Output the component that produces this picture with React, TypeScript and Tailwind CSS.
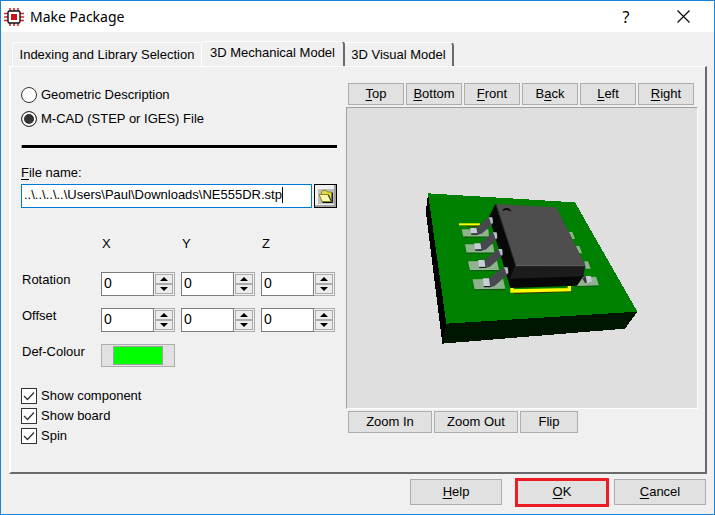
import { useState, type ReactNode } from "react";

const pushButton =
  "flex h-[22px] items-center justify-center border border-[#adadad] bg-[#e1e1e1] text-[13px] leading-4 text-black";
const footerButton = "border bg-[#e1e1e1] text-[13px] leading-4 text-black";

function ChipIcon() {
  return (
    <svg width="20" height="20" viewBox="0 0 20 20" aria-hidden="true" className="shrink-0">
      <path
        d="M6 1v18M10 1v18M14 1v18M0 6.5h20M0 10h20M0 13.5h20"
        stroke="#d9252b"
        strokeWidth="1.6"
      />
      <rect x="4" y="4" width="12" height="12" rx="1.5" fill="#fff" stroke="#111" strokeWidth="1.4" />
      <rect x="7" y="7" width="6" height="6" fill="#cc1219" />
    </svg>
  );
}

function FolderIcon() {
  return (
    <svg width="16" height="15" viewBox="0 0 16 15" aria-hidden="true">
      <rect width="16" height="15" fill="#c0c0c0" />
      <path d="M14.3 3.5V13.3H4.5" fill="none" stroke="#111" strokeWidth="1.2" />
      <path d="M3.5 12.5V3l1.2-1.5h3.6L9.5 3h4v9.5z" fill="#e4dc4c" stroke="#8a8420" strokeWidth="1" />
      <path d="M1.2 5.5h8.6l3.4 7H4z" fill="#fdf9b4" stroke="#8a8420" strokeWidth="1" />
      <path d="M10.3 5.5l3.2 6.8" stroke="#222" strokeWidth="1" />
    </svg>
  );
}

type Point = [number, number];

function Lead({ tip, foot, size }: { tip: Point; foot: Point; size: number }) {
  const [tx, ty] = tip;
  const [fx, fy] = foot;
  const bottom = fy + size;
  return (
    <g>
      <polygon
        points={`${fx + 2},${bottom - 2} ${fx + 34},${bottom - 4} ${fx + 22},${bottom + 2} ${fx + 3},${bottom + 2}`}
        fill="#15151a"
      />
      <polygon
        points={`${tx},${ty} ${tx + 13},${ty + 4} ${tx + 12},${ty + 20} ${fx + 34},${bottom - 1} ${fx + 20},${bottom} ${fx + 17},${fy}`}
        fill="#48484f"
      />
      <polygon
        points={`${fx},${fy} ${fx + 18},${fy} ${fx + 21},${bottom - 2} ${fx + 2},${bottom - 2}`}
        fill="#c8ced6"
      />
      <polygon
        points={`${tx},${ty} ${tx + 11},${ty} ${tx + 13},${ty + 17} ${tx + 7},${ty + 19} ${tx + 4},${ty + 9}`}
        fill="#b9bec7"
      />
    </g>
  );
}

function BoardScene() {
  return (
    <svg
      viewBox="-204 -216 1050 900"
      className="h-full w-full"
      role="img"
      aria-label="3D preview of the package on its board"
    >
      <g shapeRendering="crispEdges">
        <polygon points="39,40 34,83 34,108 82,491 94,430" fill="#000" />
        <polygon points="94,430 667,395 630,446 82,491" fill="#001600" />
        <polygon points="39,40 480,67 667,395 94,431" fill="#008000" />
      </g>
      <g fill="#8fb28f">
        <polygon points="140,148 220,148 222,170 145,170" />
        <polygon points="150,193 234,193 238,218 155,218" />
        <polygon points="159,244 246,242 252,270 165,271" />
        <polygon points="173,298 264,296 271,326 179,328" />
        <polygon points="462,156 472,156 480,177 472,177" />
        <polygon points="482,198 493,198 501,220 493,220" />
        <polygon points="508,244 519,244 527,266 512,266" />
        <polygon points="496,292 543,290 552,317 481,319" />
      </g>
      <path d="M145 171h77M155 219h83M165 272h87M179 329h92M481 320l71-3" stroke="#123d12" strokeWidth="2" />
      <path d="M155 139h40" stroke="#4d3000" strokeWidth="3" />
      <path d="M132 133h63" stroke="#ffff00" strokeWidth="6" />
      <path d="M296 341L470 334" stroke="#4d3000" strokeWidth="3" />
      <path d="M291 321V333L463 329V316" fill="none" stroke="#ffff00" strokeWidth="10" />
      <polygon points="241,72 222,110 286,324 302,256" fill="#080808" />
      <polygon points="286,290 508,285 486,317 286,324" fill="#070707" />
      <polygon points="301,256 511,256 505,289 284,296" fill="#1c1c1c" />
      <polygon points="243,72 424,82 511,256 302,257" fill="#4e4e4e" />
      <path d="M243 73L302 257" stroke="#242424" strokeWidth="3" />
      <path d="M302 257H510" stroke="#777" strokeWidth="2" />
      <path d="M262 91q4-8 15-7q11 2 12 11q-8-4-13-5q-7-1-10 3z" fill="#080808" />
      <polygon points="502,295 514,289 518,307 510,309" fill="#333338" />
      <polygon points="512,288 527,288 531,304 516,309" fill="#c5cbd3" />
      <Lead tip={[221, 112]} foot={[166, 144]} size={18} />
      <Lead tip={[234, 157]} foot={[178, 190]} size={20} />
      <Lead tip={[250, 207]} foot={[190, 240]} size={22} />
      <Lead tip={[267, 262]} foot={[204, 295]} size={25} />
    </svg>
  );
}

function Spinner({ label }: { label: string }) {
  const [value, setValue] = useState(0);
  return (
    <div className="flex h-6 w-[74px] border border-[#acacac] bg-[#f0f0f0]">
      <input
        aria-label={label}
        value={value}
        onChange={(e) => setValue(Number(e.target.value) || 0)}
        className="-my-px -ml-px w-[53px] min-w-0 border border-[#7a7a7a] bg-white px-0.5 pb-0.5 text-sm leading-4 outline-none"
      />
      <div className="flex flex-1 flex-col p-px">
        <button
          type="button"
          aria-label={`Increase ${label}`}
          onClick={() => setValue(value + 1)}
          className="flex flex-1 items-center justify-center border border-[#acacac] bg-[#ececec]"
        >
          <svg width="8" height="4" viewBox="0 0 8 4" aria-hidden="true"><path d="M4 0l4 4H0z" /></svg>
        </button>
        <button
          type="button"
          aria-label={`Decrease ${label}`}
          onClick={() => setValue(value - 1)}
          className="flex flex-1 items-center justify-center border border-[#acacac] bg-[#ececec]"
        >
          <svg width="8" height="4" viewBox="0 0 8 4" aria-hidden="true"><path d="M0 0h8L4 4z" /></svg>
        </button>
      </div>
    </div>
  );
}

function Radio({ label, checked, onSelect }: { label: string; checked: boolean; onSelect: () => void }) {
  return (
    <label className="flex h-6 items-center gap-1">
      <input
        type="radio"
        name="source"
        checked={checked}
        onChange={onSelect}
        className="size-4 appearance-none rounded-full border border-[#333] bg-white checked:bg-[#333] checked:shadow-[inset_0_0_0_2px_white]"
      />
      {label}
    </label>
  );
}

function Check({ label }: { label: string }) {
  return (
    <label className="flex h-5 items-center gap-1">
      <span className="grid size-4">
        <input
          type="checkbox"
          defaultChecked
          className="peer col-start-1 row-start-1 size-4 appearance-none border border-[#333] bg-white"
        />
        <svg
          viewBox="0 0 16 16"
          aria-hidden="true"
          className="pointer-events-none invisible col-start-1 row-start-1 size-4 peer-checked:visible"
        >
          <path d="M3 8l3.5 3.5L13 4.5" fill="none" stroke="#333" strokeWidth="1.3" />
        </svg>
      </span>
      {label}
    </label>
  );
}

function Key({ children }: { children: ReactNode }) {
  return <span className="underline underline-offset-2">{children}</span>;
}

export default function App() {
  const [source, setSource] = useState("mcad");
  const [path, setPath] = useState("..\\..\\..\\..\\Users\\Paul\\Downloads\\NE555DR.stp");

  return (
    <div className="flex min-h-screen flex-col border border-[#1883d7] bg-[#f0f0f0] font-['Liberation_Sans',Arial,sans-serif] text-[13px] leading-4 text-black">
      <header className="flex h-[31px] items-center bg-white pl-[3px] pr-[15px]">
        <ChipIcon />
        <h1 className="ml-1.5 flex-1 font-['Noto_Sans','Open_Sans',sans-serif] text-sm leading-5">Make Package</h1>
        <button type="button" aria-label="Help" className="flex w-8 justify-center font-['Noto_Sans',sans-serif] text-base">
          ?
        </button>
        <button type="button" aria-label="Close" className="ml-[25px] flex w-8 justify-center">
          <svg width="13" height="13" viewBox="0 0 13 13" aria-hidden="true">
            <path d="M.5.5l12 12M12.5.5l-12 12" stroke="#000" strokeWidth="1.1" />
          </svg>
        </button>
      </header>

      <main className="flex flex-1 flex-col pl-2 pr-[7px] pt-2">
        <div role="tablist" className="flex h-[26px] items-end pl-[3px]">
          <button type="button" role="tab" aria-selected="false" className="h-6 w-[189px] rounded-tl-sm border-l border-t border-white whitespace-nowrap">
            Indexing and Library Selection
          </button>
          <button type="button" role="tab" aria-selected="true" className="-mb-px h-[26px] w-36 rounded-t-sm border-l border-r-2 border-t border-l-white border-r-[#696969] border-t-white bg-[#f0f0f0] pb-1 whitespace-nowrap">
            3D Mechanical Model
          </button>
          <button type="button" role="tab" aria-selected="false" className="h-6 w-[109px] rounded-tr-sm border-r-2 border-t border-r-[#696969] border-t-white whitespace-nowrap">
            3D Visual Model
          </button>
        </div>

        <div
          role="tabpanel"
          className="flex flex-1 gap-[9px] border-b-2 border-l-2 border-r-2 border-t border-b-[#696969] border-l-white border-r-[#696969] border-t-white pl-2.5 pr-[7px] pt-4"
        >
          <section className="w-[316px] shrink-0">
            <Radio label="Geometric Description" checked={source === "geo"} onSelect={() => setSource("geo")} />
            <Radio label="M-CAD (STEP or IGES) File" checked={source === "mcad"} onSelect={() => setSource("mcad")} />
            <hr className="mt-3.5 h-1 border-0 border-b border-l border-b-white border-l-[#a0a0a0] bg-black" />
            <label htmlFor="file" className="mt-4 block">
              <Key>F</Key>ile name:
            </label>
            <div className="mt-[3px] flex gap-0.5">
              <div className="flex h-6 flex-1 items-center border border-[#0078d7] bg-white pb-0.5 pl-0.5">
                <input
                  id="file"
                  value={path}
                  onChange={(e) => setPath(e.target.value)}
                  className="max-w-full field-sizing-content bg-transparent outline-none"
                />
                <span className="h-4 w-px bg-black" />
              </div>
              <button
                type="button"
                aria-label="Browse"
                className="flex h-6 w-[23px] items-center justify-center border border-black bg-[#f0f0f0] shadow-[inset_-2px_-2px_0_#a0a0a0]"
              >
                <FolderIcon />
              </button>
            </div>

            <div className="mt-7 grid grid-cols-[74px_74px_74px_74px] gap-x-1.5 gap-y-3">
              <span className="col-start-2 pl-px">X</span>
              <span className="pl-px">Y</span>
              <span className="pl-px">Z</span>
              <span className="mt-2 pl-px">Rotation</span>
              <div className="mt-2"><Spinner label="Rotation X" /></div>
              <div className="mt-2"><Spinner label="Rotation Y" /></div>
              <div className="mt-2"><Spinner label="Rotation Z" /></div>
              <span className="pl-px">Offset</span>
              <Spinner label="Offset X" />
              <Spinner label="Offset Y" />
              <Spinner label="Offset Z" />
              <span className="pl-px whitespace-nowrap">Def-Colour</span>
              <button
                type="button"
                aria-label="Default colour"
                className="flex h-[23px] items-center justify-center border border-[#adadad] bg-[#e1e1e1]"
              >
                <span className="h-[19px] w-[50px] border border-[#a0a0a0] bg-[#00ff00]" />
              </button>
            </div>

            <div className="mt-[19px]">
              <Check label="Show component" />
              <Check label="Show board" />
              <Check label="Spin" />
            </div>
          </section>

          <section className="flex min-w-0 flex-1 flex-col pb-[39px]">
            <div className="flex gap-0.5 pl-0.5">
              <button type="button" className={`${pushButton} w-14`}><span><Key>T</Key>op</span></button>
              <button type="button" className={`${pushButton} w-14`}><span><Key>B</Key>ottom</span></button>
              <button type="button" className={`${pushButton} w-14`}><span><Key>F</Key>ront</span></button>
              <button type="button" className={`${pushButton} w-14`}><span>B<Key>a</Key>ck</span></button>
              <button type="button" className={`${pushButton} w-14`}><span><Key>L</Key>eft</span></button>
              <button type="button" className={`${pushButton} w-14`}><span><Key>R</Key>ight</span></button>
            </div>
            <div className="my-0.5 min-h-[302px] flex-1 border border-b-white border-l-[#a0a0a0] border-r-white border-t-[#a0a0a0] bg-[#dfdfdf]">
              <BoardScene />
            </div>
            <div className="flex gap-0.5 pl-0.5">
              <button type="button" className={`${pushButton} w-[84px]`}>Zoom In</button>
              <button type="button" className={`${pushButton} w-[84px]`}>Zoom Out</button>
              <button type="button" className={`${pushButton} w-[58px]`}>Flip</button>
            </div>
          </section>
        </div>
      </main>

      <footer className="flex h-10 items-center justify-end pb-2 pr-2 pt-1">
        <button type="button" className={`${footerButton} h-[26px] w-[92px] border-[#adadad]`}><Key>H</Key>elp</button>
        <button type="button" className={`${footerButton} ml-[13px] h-[29px] w-[94px] border-3 border-[#ed1c24]`}><Key>O</Key>K</button>
        <button type="button" className={`${footerButton} ml-[5px] h-[26px] w-[92px] border-[#adadad]`}><Key>C</Key>ancel</button>
      </footer>
    </div>
  );
}
